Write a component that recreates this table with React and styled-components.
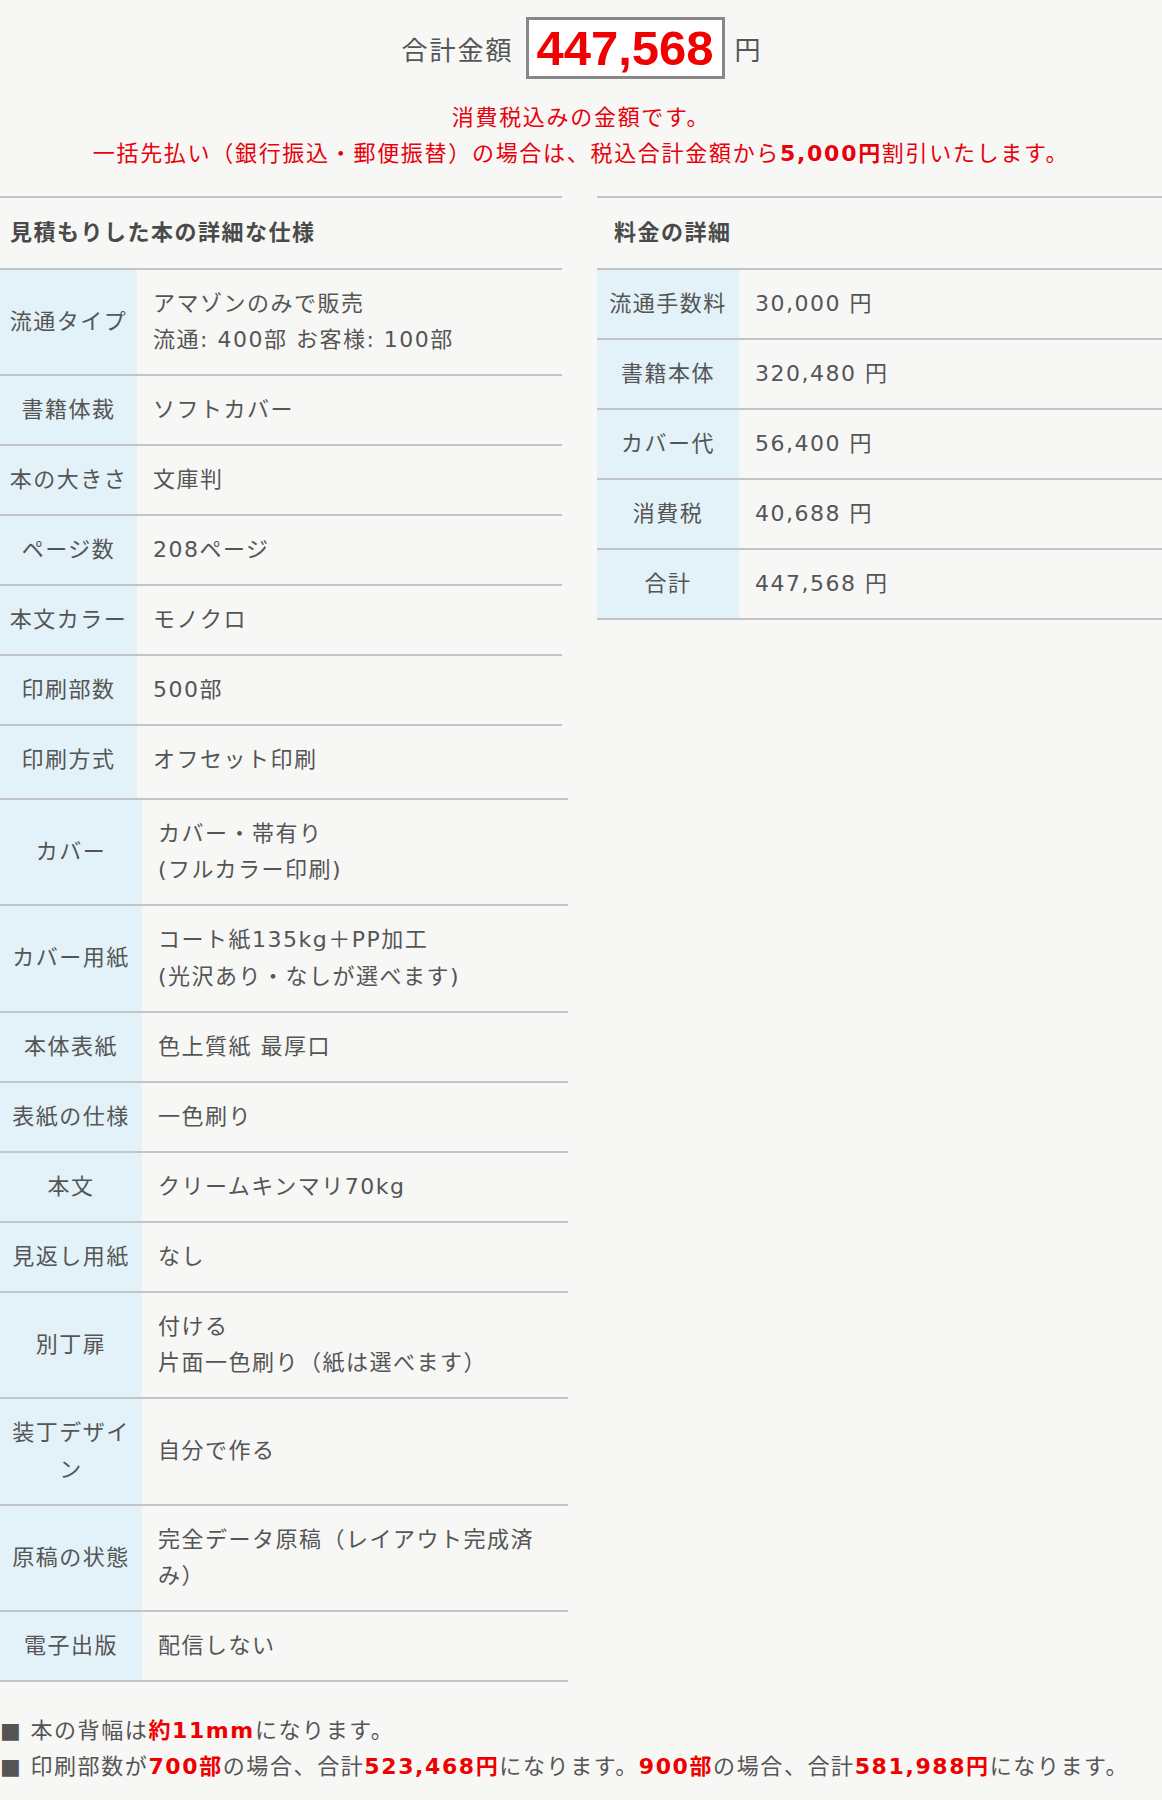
import React from 'react';
import styled, { createGlobalStyle } from 'styled-components';

const GlobalStyle = createGlobalStyle`
  body {
    margin: 0;
    background: #f7f7f5;
    font-family: "DejaVu Sans", "Noto Sans CJK JP", sans-serif;
    color: #555;
  }
`;

const Page = styled.div`
  width: 1162px;
  padding-top: 17px;
  padding-bottom: 14px;
`;

const TotalRow = styled.div`
  display: flex;
  justify-content: center;
  align-items: center;
  height: 62px;
`;

const TotalLabel = styled.span`
  font-size: 26px;
  letter-spacing: 2px;
  color: #555;
  margin-right: 12px;
`;

const TotalBox = styled.div`
  box-sizing: border-box;
  height: 62px;
  width: 199px;
  border: 3px solid #888;
  background: #fff;
  display: flex;
  align-items: center;
  justify-content: center;
  font-family: "Liberation Sans", Arial, sans-serif;
  font-weight: bold;
  font-size: 49px;
  color: #f00000;
`;

const Yen = styled.span`
  font-size: 26px;
  color: #555;
  margin-left: 10px;
`;

const Notice = styled.p`
  margin: 21px 0 0;
  text-align: center;
  font-size: 22px;
  line-height: 36px;
  letter-spacing: 1.7px;
  color: #e8000b;

  b {
    font-weight: bold;
  }
`;

const Columns = styled.div`
  display: grid;
  grid-template-columns: 562px 1fr;
  column-gap: 35px;
  align-items: start;
  margin-top: 24px;
`;

const Column = styled.div`
  display: flex;
  flex-direction: column;
`;

const Table = styled.table`
  width: ${(p) => p.$width || '100%'};
  border-collapse: collapse;
  border-top: 2px solid #c4c4c4;
  font-size: 22px;
  line-height: 36.5px;
  letter-spacing: 1.5px;

  ${(p) =>
    p.$openEnd &&
    `
    tr:last-child > td { border-bottom: none; padding-bottom: 19px; }
  `}
`;

const HeadCell = styled.th`
  text-align: left;
  font-weight: bold;
  color: #4a4a4a;
  padding: 17px 10px 16px ${(p) => p.$indent || 10}px;
  border-bottom: 2px solid #c4c4c4;
`;

const LabelCell = styled.td`
  width: ${(p) => p.$w}px;
  box-sizing: border-box;
  background: #e2f2f8;
  text-align: center;
  vertical-align: middle;
  padding: 16px 5px 15.5px;
  border-bottom: 2px solid #c4c4c4;
`;

const ValueCell = styled.td`
  text-align: left;
  vertical-align: middle;
  padding: 16px 16px 15.5px;
  border-bottom: 2px solid #c4c4c4;
`;

const Notes = styled.div`
  margin-top: 31px;
  font-size: 22px;
  line-height: 36px;
  letter-spacing: 1.6px;
  color: #555;
`;

const NoteLine = styled.div`
  white-space: nowrap;
`;

const Mark = styled.span`
  color: #555;
  margin-right: 8px;
`;

const Red = styled.b`
  color: #ee0000;
  font-weight: bold;
`;

const specTop = [
  ['流通タイプ', ['アマゾンのみで販売', '流通: 400部 お客様: 100部']],
  ['書籍体裁', 'ソフトカバー'],
  ['本の大きさ', '文庫判'],
  ['ページ数', '208ページ'],
  ['本文カラー', 'モノクロ'],
  ['印刷部数', '500部'],
  ['印刷方式', 'オフセット印刷'],
];

const specBottom = [
  ['カバー', ['カバー・帯有り', '(フルカラー印刷)']],
  ['カバー用紙', ['コート紙135kg＋PP加工', '(光沢あり・なしが選べます)']],
  ['本体表紙', '色上質紙 最厚口'],
  ['表紙の仕様', '一色刷り'],
  ['本文', 'クリームキンマリ70kg'],
  ['見返し用紙', 'なし'],
  ['別丁扉', ['付ける', '片面一色刷り（紙は選べます）']],
  ['装丁デザイン', '自分で作る'],
  ['原稿の状態', '完全データ原稿（レイアウト完成済み）'],
  ['電子出版', '配信しない'],
];

const prices = [
  ['流通手数料', '30,000 円'],
  ['書籍本体', '320,480 円'],
  ['カバー代', '56,400 円'],
  ['消費税', '40,688 円'],
  ['合計', '447,568 円'],
];

const Rows = ({ rows, labelWidth }) =>
  rows.map(([label, value]) => (
    <tr key={label}>
      <LabelCell $w={labelWidth}>{label}</LabelCell>
      <ValueCell>
        {Array.isArray(value)
          ? value.map((line, i) => <div key={i}>{line}</div>)
          : value}
      </ValueCell>
    </tr>
  ));

const App = () => {
  return (
    <Page>
      <GlobalStyle />
      <TotalRow>
        <TotalLabel>合計金額</TotalLabel>
        <TotalBox>447,568</TotalBox>
        <Yen>円</Yen>
      </TotalRow>

      <Notice>
        消費税込みの金額です。
        <br />
        一括先払い（銀行振込・郵便振替）の場合は、税込合計金額から<b>5,000円</b>割引いたします。
      </Notice>

      <Columns>
        <Column>
          <Table $openEnd>
            <thead>
              <tr>
                <HeadCell colSpan={2}>見積もりした本の詳細な仕様</HeadCell>
              </tr>
            </thead>
            <tbody>
              <Rows rows={specTop} labelWidth={137} />
            </tbody>
          </Table>
          <Table $width="568px">
            <tbody>
              <Rows rows={specBottom} labelWidth={142} />
            </tbody>
          </Table>
        </Column>

        <Column>
          <Table>
            <thead>
              <tr>
                <HeadCell colSpan={2} $indent={17}>料金の詳細</HeadCell>
              </tr>
            </thead>
            <tbody>
              <Rows rows={prices} labelWidth={142} />
            </tbody>
          </Table>
        </Column>
      </Columns>

      <Notes>
        <NoteLine>
          <Mark>■</Mark>本の背幅は<Red>約11mm</Red>になります。
        </NoteLine>
        <NoteLine>
          <Mark>■</Mark>印刷部数が<Red>700部</Red>の場合、合計<Red>523,468円</Red>になります。<Red>900部</Red>の場合、合計<Red>581,988円</Red>になります。
        </NoteLine>
      </Notes>
    </Page>
  );
};

export default App;
